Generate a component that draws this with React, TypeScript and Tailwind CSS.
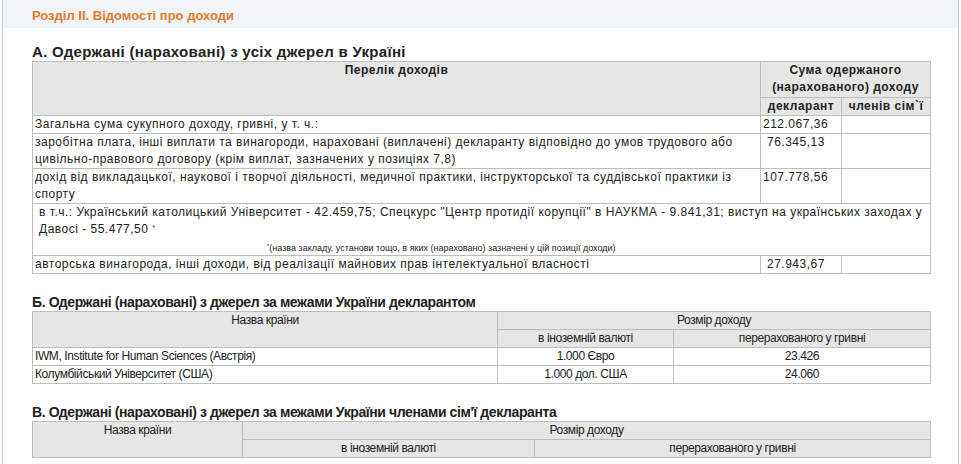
const cell = 'border border-[#bdbdbd] px-[2px] align-top';
const hd = 'border border-[#bdbdbd] bg-[#e6e6e6] font-bold text-center align-top px-1';
const hdB = 'border border-[#bdbdbd] bg-[#e6e6e6] text-center align-top px-1';

export default function App() {
  return (
    <div className="h-[464px] w-[961px] overflow-hidden bg-white font-[Liberation_Sans] text-[#222]">
      <div className="mx-[2px] h-full border-x border-[#b8cde0]">
        <div className="h-[28px] bg-[#f1f4f7] pl-[29px] pt-[6px] text-[13px] font-bold text-[#e07a2b]">
          Розділ II. Відомості про доходи
        </div>
        <div className="pl-[29px] pr-[26px]">
          <h2 className="mt-[15px] text-[15px] font-bold leading-[18px] tracking-[0.3px] text-[#222]">А. Одержані (нараховані) з усіх джерел в Україні</h2>
          <table className="w-[899px] border-collapse text-[12px] leading-[17px] tracking-[0.5px]">
            <colgroup><col className="w-[728px]" /><col className="w-[81px]" /><col /></colgroup>
            <tbody>
              <tr className="h-[36px]">
                <td className={hd} rowSpan={2}>Перелік доходів</td>
                <td className={hd} colSpan={2}>Сума одержаного (нарахованого) доходу</td>
              </tr>
              <tr><td className={hd}>декларант</td><td className={hd}>членів сім`ї</td></tr>
              <tr><td className={cell}>Загальна сума сукупного доходу, гривні, у т. ч.:</td><td className={cell}>212.067,36</td><td className={cell}></td></tr>
              <tr><td className={cell}>заробітна плата, інші виплати та винагороди, нараховані (виплачені) декларанту відповідно до умов трудового або цивільно-правового договору (крім виплат, зазначених у позиціях 7,8)</td><td className={`${cell} pl-[6px]`}>76.345,13</td><td className={cell}></td></tr>
              <tr><td className={cell}>дохід від викладацької, наукової і творчої діяльності, медичної практики, інструкторської та суддівської практики із спорту</td><td className={cell}>107.778,56</td><td className={cell}></td></tr>
              <tr>
                <td className={`${cell} pl-[6px]`} colSpan={3}>
                  <div>в т.ч.: Український католицький Університет - 42.459,75; Спецкурс "Центр протидії корупції" в НАУКМА - 9.841,31; виступ на українських заходах у Давосі - 55.477,50 <sup className="text-[7px]">*</sup></div>
                  <div className="mt-[4px] pl-[228px] text-[9px] leading-[13px] tracking-normal"><sup className="text-[6px]">*</sup>(назва закладу, установи тощо, в яких (нараховано) зазначені у цій позиції доходи)</div>
                </td>
              </tr>
              <tr><td className={cell}>авторська винагорода, інші доходи, від реалізації майнових прав інтелектуальної власності</td><td className={`${cell} pl-[6px]`}>27.943,67</td><td className={cell}></td></tr>
            </tbody>
          </table>

          <div className="tracking-[-0.4px]">
            <h2 className="mt-[19px] text-[14px] font-bold leading-[18px]">Б. Одержані (нараховані) з джерел за межами України декларантом</h2>
            <table className="w-[899px] border-collapse text-[12px] leading-[17px]">
              <colgroup><col className="w-[465px]" /><col className="w-[176px]" /><col /></colgroup>
              <tbody>
                <tr><td className={hdB} rowSpan={2}>Назва країни</td><td className={hdB} colSpan={2}>Розмір доходу</td></tr>
                <tr><td className={hdB}>в іноземній валюті</td><td className={hdB}>перерахованого у гривні</td></tr>
                <tr><td className={cell}>IWM, Institute for Human Sciences (Австрія)</td><td className={`${cell} text-center`}>1.000 Євро</td><td className={`${cell} text-center`}>23.426</td></tr>
                <tr><td className={cell}>Колумбійський Університет (США)</td><td className={`${cell} text-center`}>1.000 дол. США</td><td className={`${cell} text-center`}>24.060</td></tr>
              </tbody>
            </table>

            <h2 className="mt-[19px] text-[14px] font-bold leading-[18px]">В. Одержані (нараховані) з джерел за межами України членами сім'ї декларанта</h2>
            <table className="w-[899px] border-collapse text-[12px] leading-[17px]">
              <colgroup><col className="w-[210px]" /><col className="w-[292px]" /><col /></colgroup>
              <tbody>
                <tr><td className={hdB} rowSpan={2}>Назва країни</td><td className={hdB} colSpan={2}>Розмір доходу</td></tr>
                <tr><td className={hdB}>в іноземній валюті</td><td className={hdB}>перерахованого у гривні</td></tr>
              </tbody>
            </table>
          </div>
        </div>
      </div>
    </div>
  );
}
